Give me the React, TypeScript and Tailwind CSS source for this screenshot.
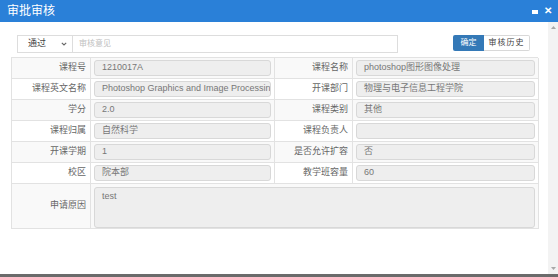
import React from "react";

const font = { fontFamily: '"Liberation Sans", "Noto Sans CJK SC", Arial, sans-serif' };

type Row = { l1: string; v1: string; l2: string; v2: string; striped: boolean };

const rows: Row[] = [
  { l1: "课程号", v1: "1210017A", l2: "课程名称", v2: "photoshop图形图像处理", striped: true },
  { l1: "课程英文名称", v1: "Photoshop Graphics and Image Processing", l2: "开课部门", v2: "物理与电子信息工程学院", striped: false },
  { l1: "学分", v1: "2.0", l2: "课程类别", v2: "其他", striped: true },
  { l1: "课程归属", v1: "自然科学", l2: "课程负责人", v2: "", striped: false },
  { l1: "开课学期", v1: "1", l2: "是否允许扩容", v2: "否", striped: true },
  { l1: "校区", v1: "院本部", l2: "教学班容量", v2: "60", striped: false },
];

function Label({ text, striped }: { text: string; striped: boolean }) {
  return (
    <div
      className={`h-[21px] border-r border-b border-[#e2e2e2] flex items-center justify-end pr-[4px] text-[9px] text-[#666666] ${
        striped ? "bg-[#f9f9f9]" : "bg-white"
      }`}
    >
      {text}
    </div>
  );
}

function Value({ text, striped }: { text: string; striped: boolean }) {
  return (
    <div
      className={`h-[21px] border-r border-b border-[#e2e2e2] flex items-center px-[3px] ${
        striped ? "bg-[#f9f9f9]" : "bg-white"
      }`}
    >
      <div className="h-[16px] w-full rounded-[3px] border border-[#d8d8d8] bg-[#eeeeee] pl-[7px] flex items-center text-[9px] text-[#777777] overflow-hidden whitespace-nowrap">
        {text}
      </div>
    </div>
  );
}

export default function App() {
  return (
    <div className="w-[558px] h-[277px] bg-white flex flex-col overflow-hidden" style={font}>
      {/* header */}
      <div className="h-[22px] bg-[#2a80d8] flex items-center justify-between pl-[7px] pr-[6px] shrink-0">
        <span className="text-white text-[12px] leading-none">审批审核</span>
        <div className="flex items-center gap-[6px]">
          <div className="w-[6px] h-[4px] bg-white mt-[1px]" />
          <span className="text-white text-[10px] font-bold leading-none">✕</span>
        </div>
      </div>

      {/* body */}
      <div className="flex flex-1 min-h-0">
        <div className="flex-1 pl-[11px] pt-[13px]">
          {/* toolbar */}
          <div className="flex items-center">
            <div className="ml-[6px] w-[56px] h-[18px] border border-[#dddddd] flex items-center justify-between pl-[10px] pr-[5px] text-[9px] text-[#444444]">
              <span>通过</span>
              <svg width="6" height="4" viewBox="0 0 6 4">
                <path d="M0.8 0.8 L3 3 L5.2 0.8" stroke="#666" strokeWidth="1.1" fill="none" />
              </svg>
            </div>
            <div className="w-[325px] h-[18px] border border-l-0 border-[#dddddd] flex items-center pl-[6px] text-[8px] text-[#c0c0c0]">
              审核意见
            </div>
            <div className="ml-[55px] flex h-[16px] -mt-[2px]">
              <div className="w-[31px] h-full bg-[#3479b7] rounded-l-[2px] flex items-center justify-center text-[8px] text-white">
                确定
              </div>
              <div className="w-[46px] h-full border border-l-0 border-[#d8d8d8] rounded-r-[2px] flex items-center justify-center text-[8px] text-[#444444] tracking-[1px]">
                审核历史
              </div>
            </div>
          </div>

          {/* table */}
          <div className="mt-[4px] w-[527px] grid grid-cols-[79px_184px_78px_186px] border-l border-t border-[#e2e2e2]">
            {rows.map((r, i) => (
              <React.Fragment key={i}>
                <Label text={r.l1} striped={r.striped} />
                <Value text={r.v1} striped={r.striped} />
                <Label text={r.l2} striped={r.striped} />
                <Value text={r.v2} striped={r.striped} />
              </React.Fragment>
            ))}
            <div className="h-[45px] border-r border-b border-[#e2e2e2] bg-[#f9f9f9] flex items-center justify-end pr-[4px] text-[9px] text-[#666666]">
              申请原因
            </div>
            <div className="col-span-3 h-[45px] border-r border-b border-[#e2e2e2] bg-[#f9f9f9] px-[3px] pt-[3px]">
              <div className="h-[41px] w-full rounded-[3px] border border-[#d8d8d8] bg-[#eeeeee] pl-[7px] pt-[2px] text-[9px] text-[#777777]">
                test
              </div>
            </div>
          </div>
        </div>

        {/* scrollbar */}
        <div className="w-[10px] bg-[#f3f3f3] flex flex-col items-center justify-between py-[4px]">
          <svg width="5" height="3" viewBox="0 0 5 3">
            <path d="M0 3 L2.5 0 L5 3 Z" fill="#a8a8a8" />
          </svg>
          <svg width="5" height="3" viewBox="0 0 5 3">
            <path d="M0 0 L2.5 3 L5 0 Z" fill="#a8a8a8" />
          </svg>
        </div>
      </div>

      {/* bottom bar */}
      <div className="h-[3px] bg-[#6b6b6b] shrink-0" />
    </div>
  );
}
